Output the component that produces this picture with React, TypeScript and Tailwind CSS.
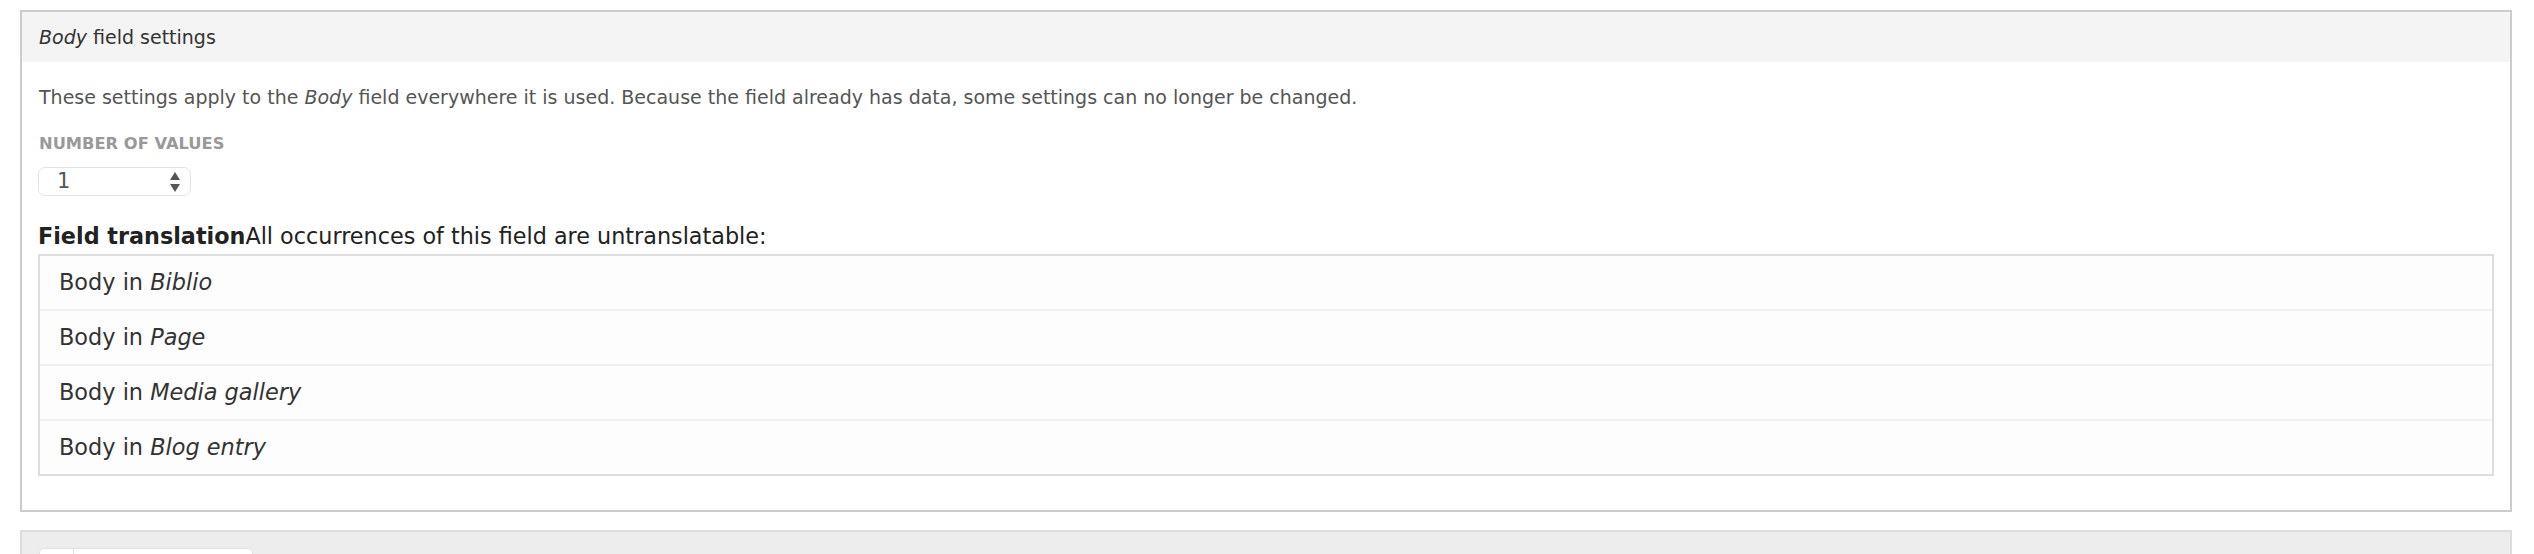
const bundles = ['Biblio', 'Page', 'Media gallery', 'Blog entry'];

function NumberSelect() {
  return (
    <div className="mt-[13px] flex h-[29px] w-[153px] items-center justify-between rounded-[7px] border border-[#e4e4e4] bg-white pl-[18px] pr-[9px]">
      <span className="text-[21px] leading-none text-[#555]">1</span>
      <svg width="12" height="22" viewBox="0 0 12 22" className="text-[#555]">
        <path d="M6 1 L11 9 L1 9 Z" fill="currentColor" />
        <path d="M6 21 L11 13 L1 13 Z" fill="currentColor" />
      </svg>
    </div>
  );
}

export default function App() {
  return (
    <div className="h-[554px] overflow-hidden bg-white pt-[10px] pl-[20px] pr-[22px] font-['DejaVu_Sans',sans-serif] text-[#333]">
      <section className="border-2 border-[#ccc]">
        <div className="flex h-[50px] items-center bg-[#f4f4f4] pl-[17px] text-[19px]">
          <span>
            <em>Body</em> field settings
          </span>
        </div>

        <div className="px-4 pb-[34px]">
          <p className="mt-[23px] pl-px text-[19px] leading-[24px] text-[#555]">
            These settings apply to the <em>Body</em> field everywhere it is used. Because the field already has data, some settings can no longer be changed.
          </p>

          <div className="mt-[25px] pl-px text-[16.3px] font-bold uppercase leading-[20px] text-[#999]">Number of values</div>
          <NumberSelect />

          <div className="mt-[27px] text-[22.3px] leading-[26px] text-[#222]">
            <span className="font-bold">Field translation</span>All occurrences of this field are untranslatable:
          </div>

          <div className="mt-[5px] border-2 border-[#ddd]">
            {bundles.map((b, i) => (
              <div
                key={b}
                className={
                  'flex items-center bg-[#fdfdfd] pl-[19px] text-[22.4px] text-[#333] ' +
                  (i > 0 ? 'h-[55px] border-t-2 border-[#f0f0f0]' : 'h-[53px]')
                }
              >
                <span>
                  Body in <em>{b}</em>
                </span>
              </div>
            ))}
          </div>
        </div>
      </section>

      <section className="mt-[18px] h-[40px] border-2 border-b-0 border-[#ddd] bg-[#ededed] pl-[17px] pt-4">
        <div className="flex h-[40px] w-[214px] rounded-[5px] border border-[#e2e2e2] bg-white">
          <div className="w-[34px] border-r border-[#e2e2e2]" />
        </div>
      </section>
    </div>
  );
}
